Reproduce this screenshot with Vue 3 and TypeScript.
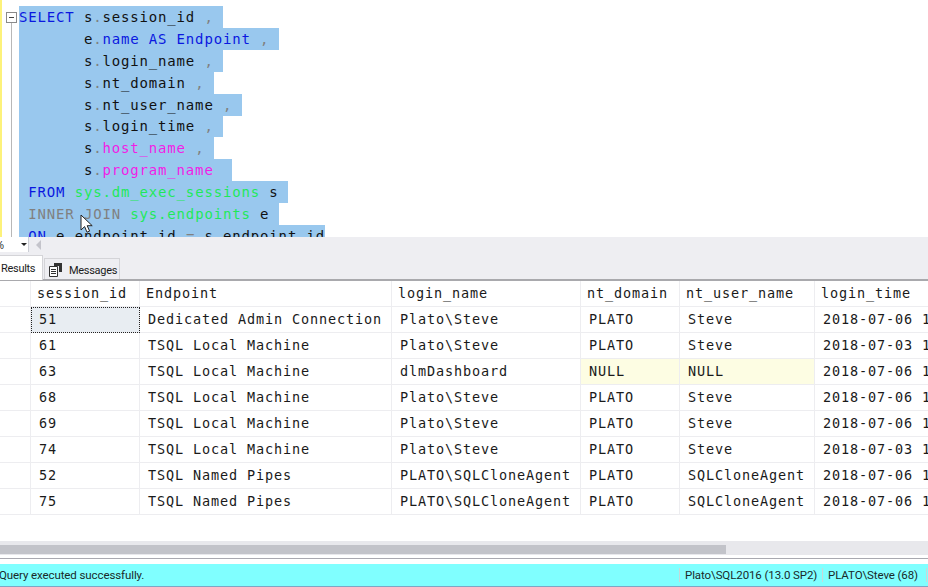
<script setup lang="ts">
interface Seg { t: string; c?: string }
const lines: Seg[][] = [
  [{ t: 'SELECT', c: 'kw' }, { t: ' s' }, { t: '.', c: 'gr' }, { t: 'session_id ' }, { t: ',', c: 'gr' }, { t: ' ' }],
  [{ t: '       e' }, { t: '.', c: 'gr' }, { t: 'name AS Endpoint', c: 'kw' }, { t: ' ' }, { t: ',', c: 'gr' }, { t: ' ' }],
  [{ t: '       s' }, { t: '.', c: 'gr' }, { t: 'login_name ' }, { t: ',', c: 'gr' }, { t: ' ' }],
  [{ t: '       s' }, { t: '.', c: 'gr' }, { t: 'nt_domain ' }, { t: ',', c: 'gr' }, { t: ' ' }],
  [{ t: '       s' }, { t: '.', c: 'gr' }, { t: 'nt_user_name ' }, { t: ',', c: 'gr' }, { t: ' ' }],
  [{ t: '       s' }, { t: '.', c: 'gr' }, { t: 'login_time ' }, { t: ',', c: 'gr' }, { t: ' ' }],
  [{ t: '       s' }, { t: '.', c: 'gr' }, { t: 'host_name', c: 'pk' }, { t: ' ' }, { t: ',', c: 'gr' }, { t: ' ' }],
  [{ t: '       s' }, { t: '.', c: 'gr' }, { t: 'program_name', c: 'pk' }, { t: '  ' }],
  [{ t: ' ' }, { t: 'FROM', c: 'kw' }, { t: ' ' }, { t: 'sys.dm_exec_sessions', c: 'gn' }, { t: ' s ' }],
  [{ t: ' ' }, { t: 'INNER JOIN', c: 'gr' }, { t: ' ' }, { t: 'sys.endpoints', c: 'gn' }, { t: ' e ' }],
  [{ t: ' ' }, { t: 'ON', c: 'kw' }, { t: ' e' }, { t: '.', c: 'gr' }, { t: 'endpoint_id ' }, { t: '=', c: 'gr' }, { t: ' s' }, { t: '.', c: 'gr' }, { t: 'endpoint_id' }],
]
const headers: string[] = ['', 'session_id', 'Endpoint', 'login_name', 'nt_domain', 'nt_user_name', 'login_time']
const rows: string[][] = [
  ['51', 'Dedicated Admin Connection', 'Plato\\Steve', 'PLATO', 'Steve', '2018-07-06 1'],
  ['61', 'TSQL Local Machine', 'Plato\\Steve', 'PLATO', 'Steve', '2018-07-03 1'],
  ['63', 'TSQL Local Machine', 'dlmDashboard', 'NULL', 'NULL', '2018-07-06 1'],
  ['68', 'TSQL Local Machine', 'Plato\\Steve', 'PLATO', 'Steve', '2018-07-06 1'],
  ['69', 'TSQL Local Machine', 'Plato\\Steve', 'PLATO', 'Steve', '2018-07-06 1'],
  ['74', 'TSQL Local Machine', 'Plato\\Steve', 'PLATO', 'Steve', '2018-07-03 1'],
  ['52', 'TSQL Named Pipes', 'PLATO\\SQLCloneAgent', 'PLATO', 'SQLCloneAgent', '2018-07-06 1'],
  ['75', 'TSQL Named Pipes', 'PLATO\\SQLCloneAgent', 'PLATO', 'SQLCloneAgent', '2018-07-06 1'],
]
</script>

<template>
  <div class="app">
    <section class="editor">
      <div class="yellow"></div>
      <div class="gutter">
        <span class="fold"><i></i></span>
        <span class="guide"></span>
      </div>
      <div class="code">
        <div v-for="(line, i) in lines" :key="i" class="line">
          <span class="sel"><span v-for="(s, j) in line" :key="j" :class="s.c">{{ s.t }}</span></span>
        </div>
      </div>
      <svg class="cursor" width="14" height="20" viewBox="0 0 14 20">
        <path d="M1 1v15l3.6-3.4 2.4 5.6 2.6-1.1-2.4-5.4h5z" fill="#fff" stroke="#222" stroke-width="1" />
      </svg>
    </section>

    <div class="zoombar">
      <div class="zoombox">
        <span class="pct">%</span>
        <span class="caret"></span>
      </div>
      <span class="leftarrow"></span>
    </div>

    <div class="tabs">
      <div class="tab active">Results</div>
      <div class="tab">
        <svg class="msgicon" width="15" height="14" viewBox="0 0 15 14">
          <path d="M1.5 3.5h8v10h-8z" fill="#fff" stroke="#333" />
          <path d="M3 6.5h5M3 8.5h5M3 10.5h5" stroke="#333" />
          <path d="M6 0h8v9h-3V3H6z" fill="#333" />
        </svg>
        <span>Messages</span>
      </div>
    </div>

    <div class="grid">
      <div v-for="(h, i) in headers" :key="'h' + i" class="hd">{{ h }}</div>
      <template v-for="(r, ri) in rows" :key="ri">
        <div class="cell"></div>
        <div
          v-for="(v, ci) in r"
          :key="ci"
          class="cell"
          :class="{ nul: v === 'NULL', focus: ri === 0 && ci === 0 }"
        >{{ v }}</div>
      </template>
    </div>

    <div class="spacer"></div>
    <div class="hscroll"><div class="thumb"></div></div>
    <div class="gap"></div>

    <footer class="status">
      <span class="msg">Query executed successfully.</span>
      <span class="seg srv">Plato\SQL2016 (13.0 SP2)</span>
      <span class="seg usr">PLATO\Steve (68)</span>
      <span class="seg end"></span>
    </footer>
  </div>
</template>

<style>
html, body { margin: 0; background: #fff; overflow: hidden; }
</style>

<style scoped>
.app {
  width: 928px;
  height: 587px;
  display: flex;
  flex-direction: column;
  overflow: hidden;
  background: #fff;
}
.editor {
  position: relative;
  height: 237px;
  flex: none;
  display: flex;
  overflow: hidden;
}
.yellow { width: 2px; background: #fdf27a; flex: none; }
.gutter { width: 17px; flex: none; position: relative; display: flex; flex-direction: column; align-items: flex-start; padding: 12px 0 0 4px; box-sizing: border-box; }
.fold {
  width: 9px; height: 9px; border: 1px solid #8a8a8a; background: #fff; position: relative; flex: none;
}
.fold i { position: absolute; left: 2px; right: 2px; top: 4px; height: 1px; background: #444; }
.guide { width: 1px; background: #b8b8b8; flex: 1; margin-left: 5px; }
.code {
  padding-top: 6px;
  font-family: "DejaVu Sans Mono", monospace;
  font-size: 14px;
  letter-spacing: 0.84px;
  color: #111;
}
.line { height: 21.9px; line-height: 22px; white-space: pre; }
.sel { display: inline-block; height: 22px; background: #99c8ee; }
.kw { color: #0a18e0; }
.gr { color: #808080; }
.pk { color: #f01ee6; }
.gn { color: #1fe85a; }
.cursor { position: absolute; left: 80px; top: 214px; }

.zoombar {
  height: 15px; flex: none; background: #eeeef2; display: flex; align-items: center;
}
.zoombox {
  width: 29px; height: 15px; background: #fff; position: relative; font: 11px "Open Sans", sans-serif; color: #222; box-sizing: border-box; border-right: 1px solid #ccced6; display: flex; align-items: center; overflow: hidden;
}
.pct { margin-left: -5px; }
.caret { position: absolute; left: 21px; top: 6px; border-left: 3px solid transparent; border-right: 3px solid transparent; border-top: 3px solid #222; }
.leftarrow { margin-left: 7px; border-top: 5px solid transparent; border-bottom: 5px solid transparent; border-right: 5px solid #c4c4cb; }

.tabs {
  height: 29px; flex: none; box-sizing: border-box; background: #eeeef2; border-bottom: 2px solid #a9a9ad; display: flex; align-items: flex-end;
  font-family: Roboto, sans-serif; font-size: 11px; letter-spacing: -0.3px; color: #1c1c1c;
}
.tab {
  height: 21px; margin-left: 1px; padding: 2px 0 0 3px; display: flex; align-items: center; gap: 6px; box-sizing: border-box; background: #eeeef2; border: 1px solid #d4d4d8; border-bottom: none; width: 76px;
}
.msgicon { flex: none; }
.tab.active { height: 25px; width: 43px; margin-left: 0; margin-bottom: -1px; padding: 0 0 0 1px; background: #fff; border-left: none; }

.grid {
  display: grid;
  grid-template-columns: 31px 109px 252px 189px 99px 135px 114px;
  grid-template-rows: 26px repeat(8, 26px);
  flex: none;
  font-family: "DejaVu Sans Mono", monospace;
  font-size: 13.5px;
  letter-spacing: 0.87px;
  color: #1a1a1a;
}
.hd, .cell {
  box-sizing: border-box;
  border-right: 1px solid #ededf0;
  border-bottom: 1px solid #ededf0;
  line-height: 25px;
  white-space: pre;
  overflow: hidden;
}
.hd { padding-left: 6px; }
.cell { padding-left: 8px; }
.hd:first-child, .cell:nth-child(7n+1) { padding: 0; }
.nul { background: #fdfde3; }
.focus { background: #e8edf2; outline: 1px dotted #222; outline-offset: -1px; }

.spacer { height: 26px; flex: none; }
.hscroll { height: 14px; flex: none; background: #e8e8ec; padding-top: 4px; box-sizing: border-box; }
.thumb { width: 726px; height: 9px; background: #c2c3c9; }
.gap { height: 9px; flex: none; border-top: 3px solid #fff; box-sizing: border-box; background: linear-gradient(#a9a9b0 1px, #fff 1px); }

.status {
  height: 23px; flex: none; box-sizing: border-box; background: #80ffff; border-bottom: 1px solid #7fa6c4; display: flex; align-items: center;
  font-family: Roboto, sans-serif; font-size: 11.5px; letter-spacing: -0.1px; color: #1a2a2a; white-space: nowrap;
}
.msg { margin-left: -1px; flex: 1; }
.seg { height: 14px; line-height: 14px; border-left: 1px solid #c8d8d8; box-sizing: border-box; padding-left: 5px; flex: none; }
.srv { width: 143px; }
.usr { width: 104px; }
.end { width: 2px; padding: 0; }
</style>
